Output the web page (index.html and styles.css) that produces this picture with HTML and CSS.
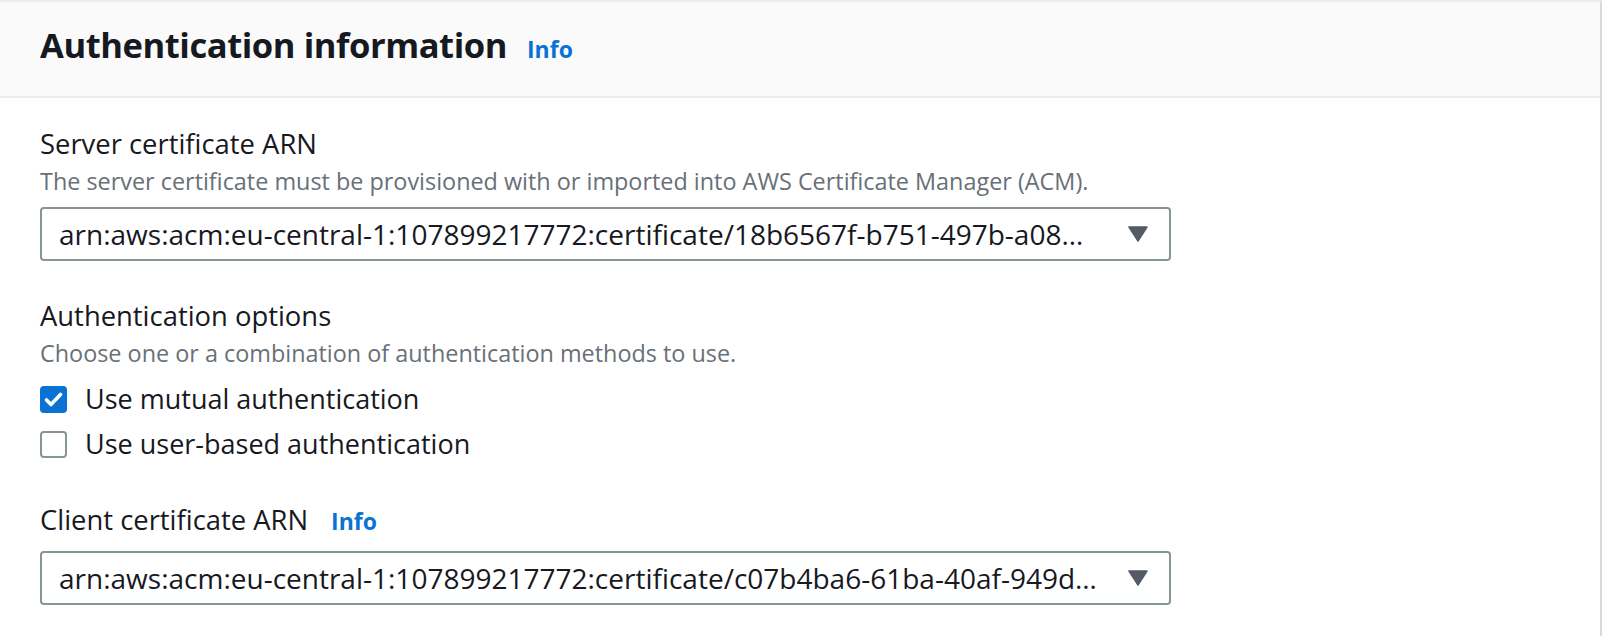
FILE: index.html
```html
<!DOCTYPE html>
<html lang="en">
<head>
<meta charset="utf-8">
<title>Authentication information</title>
<link rel="stylesheet" href="styles.css">
</head>
<body>
<div class="card">
  <div class="card-header">
    <h2 class="title">Authentication information</h2><a class="info info-header" href="#">Info</a>
  </div>
  <div class="card-body">
    <div class="field">
      <div class="label">Server certificate ARN</div>
      <div class="desc">The server certificate must be provisioned with or imported into AWS Certificate Manager (ACM).</div>
      <div class="select">
        <span class="select-text">arn:aws:acm:eu-central-1:107899217772:certificate/18b6567f-b751-497b-a08…</span>
        <svg class="caret" width="20" height="16" viewBox="0 0 20 16"><polygon points="1,1 19,1 10,15" fill="#545b64" stroke="#545b64" stroke-width="1.5" stroke-linejoin="round"/></svg>
      </div>
    </div>
    <div class="field">
      <div class="label">Authentication options</div>
      <div class="desc">Choose one or a combination of authentication methods to use.</div>
      <div class="checks">
        <label class="check-row">
          <span class="box box-checked"><svg width="27" height="27" viewBox="0 0 27 27"><polyline points="6.5,14 11,18.5 20.5,8.5" fill="none" stroke="#fff" stroke-width="3.6" stroke-linecap="round" stroke-linejoin="round"/></svg></span>
          <span class="check-label">Use mutual authentication</span>
        </label>
        <label class="check-row">
          <span class="box"></span>
          <span class="check-label">Use user-based authentication</span>
        </label>
      </div>
    </div>
    <div class="field">
      <div class="label">Client certificate ARN<a class="info info-label" href="#">Info</a></div>
      <div class="select select-nodesc">
        <span class="select-text">arn:aws:acm:eu-central-1:107899217772:certificate/c07b4ba6-61ba-40af-949d…</span>
        <svg class="caret" width="20" height="16" viewBox="0 0 20 16"><polygon points="1,1 19,1 10,15" fill="#545b64" stroke="#545b64" stroke-width="1.5" stroke-linejoin="round"/></svg>
      </div>
    </div>
  </div>
</div>
</body>
</html>
```

FILE: styles.css
```css
* { box-sizing: border-box; }

html, body {
  margin: 0;
  padding: 0;
  background: #ffffff;
}

body {
  font-family: "Open Sans", "Noto Sans", sans-serif;
  color: #16191f;
  width: 1602px;
  height: 638px;
  overflow: hidden;
}

.card {
  border-top: 2px solid #eaeded;
  border-right: 2px solid #d5dbdb;
  background: #ffffff;
  height: 636px;
}

.card-header {
  background: #fafafa;
  border-bottom: 2px solid #eaeded;
  padding: 22px 40px 28px;
  height: 96px;
  display: flex;
  align-items: baseline;
}

.title {
  margin: 0;
  font-size: 34.6px;
  line-height: 42px;
  font-weight: 700;
  letter-spacing: -0.45px;
  color: #16191f;
}

.info {
  font-weight: 700;
  color: #0972d3;
  text-decoration: none;
  font-size: 23px;
}

.info-header {
  margin-left: 20px;
}

.info-label {
  margin-left: 23px;
}

.card-body {
  padding: 25px 40px 0;
  display: flex;
  flex-direction: column;
  gap: 34px;
}

.field {
  display: flex;
  flex-direction: column;
}

.label {
  font-size: 27.4px;
  line-height: 42px;
  color: #16191f;
}

.desc {
  font-size: 23.4px;
  line-height: 32px;
  color: #687078;
}

.select {
  margin-top: 10px;
  width: 1131px;
  height: 54px;
  border: 2px solid #879596;
  border-radius: 4px;
  display: flex;
  align-items: center;
  padding: 0 21px 0 17px;
  gap: 20px;
}

.select-nodesc {
  margin-top: 9px;
}

.select-text {
  flex: 1;
  font-size: 28px;
  color: #16191f;
  white-space: nowrap;
  overflow: hidden;
  text-overflow: ellipsis;
}

.caret {
  flex: none;
  display: block;
}

.checks {
  margin-top: 9px;
  display: flex;
  flex-direction: column;
  gap: 3px;
}

.check-row {
  display: flex;
  align-items: center;
  height: 42px;
}

.box {
  width: 27px;
  height: 27px;
  border: 2px solid #879596;
  border-radius: 4px;
  background: #ffffff;
  flex: none;
  display: block;
}

.box-checked {
  border: none;
  background: #0972d3;
}

.box-checked svg {
  display: block;
}

.check-label {
  margin-left: 18px;
  font-size: 27px;
  line-height: 42px;
  color: #16191f;
}
```
